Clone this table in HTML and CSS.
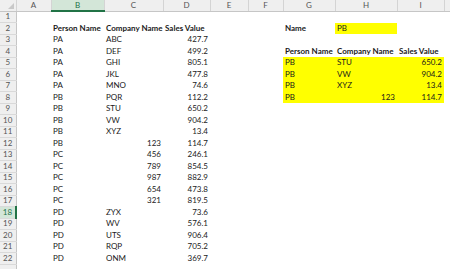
FILE: index.html
```html
<!DOCTYPE html>
<html>
<head>
<meta charset="utf-8">
<link rel="stylesheet" href="styles.css">
</head>
<body>
<table class="sheet">
<colgroup>
<col class="w-rh"><col class="w-a"><col class="w-b"><col class="w-c"><col class="w-d"><col class="w-e"><col class="w-f"><col class="w-g"><col class="w-h"><col class="w-i"><col class="w-j">
</colgroup>
<thead>
<tr class="hdr">
<th class="corner"><span class="tri"></span></th><th>A</th><th class="sel">B</th><th>C</th><th>D</th><th>E</th><th>F</th><th>G</th><th>H</th><th>I</th><th></th>
</tr>
</thead>
<tbody>
<tr><th>1</th><td></td><td></td><td></td><td></td><td></td><td></td><td></td><td></td><td></td><td></td></tr>
<tr><th>2</th><td></td><td class="b">Person Name</td><td class="b">Company Name</td><td class="b">Sales Value</td><td></td><td></td><td class="b">Name</td><td class="y">PB</td><td></td><td></td></tr>
<tr><th>3</th><td></td><td>PA</td><td>ABC</td><td class="n">427.7</td><td></td><td></td><td></td><td></td><td></td><td></td></tr>
<tr><th>4</th><td></td><td>PA</td><td>DEF</td><td class="n">499.2</td><td></td><td></td><td class="b">Person Name</td><td class="b">Company Name</td><td class="b">Sales Value</td><td></td></tr>
<tr><th>5</th><td></td><td>PA</td><td>GHI</td><td class="n">805.1</td><td></td><td></td><td class="y">PB</td><td class="y">STU</td><td class="y n">650.2</td><td></td></tr>
<tr><th>6</th><td></td><td>PA</td><td>JKL</td><td class="n">477.8</td><td></td><td></td><td class="y">PB</td><td class="y">VW</td><td class="y n">904.2</td><td></td></tr>
<tr><th>7</th><td></td><td>PA</td><td>MNO</td><td class="n">74.6</td><td></td><td></td><td class="y">PB</td><td class="y">XYZ</td><td class="y n">13.4</td><td></td></tr>
<tr><th>8</th><td></td><td>PB</td><td>PQR</td><td class="n">112.2</td><td></td><td></td><td class="y">PB</td><td class="y n">123</td><td class="y n">114.7</td><td></td></tr>
<tr><th>9</th><td></td><td>PB</td><td>STU</td><td class="n">650.2</td><td></td><td></td><td></td><td></td><td></td><td></td></tr>
<tr><th>10</th><td></td><td>PB</td><td>VW</td><td class="n">904.2</td><td></td><td></td><td></td><td></td><td></td><td></td></tr>
<tr><th>11</th><td></td><td>PB</td><td>XYZ</td><td class="n">13.4</td><td></td><td></td><td></td><td></td><td></td><td></td></tr>
<tr><th>12</th><td></td><td>PB</td><td class="n">123</td><td class="n">114.7</td><td></td><td></td><td></td><td></td><td></td><td></td></tr>
<tr><th>13</th><td></td><td>PC</td><td class="n">456</td><td class="n">246.1</td><td></td><td></td><td></td><td></td><td></td><td></td></tr>
<tr><th>14</th><td></td><td>PC</td><td class="n">789</td><td class="n">854.5</td><td></td><td></td><td></td><td></td><td></td><td></td></tr>
<tr><th>15</th><td></td><td>PC</td><td class="n">987</td><td class="n">882.9</td><td></td><td></td><td></td><td></td><td></td><td></td></tr>
<tr><th>16</th><td></td><td>PC</td><td class="n">654</td><td class="n">473.8</td><td></td><td></td><td></td><td></td><td></td><td></td></tr>
<tr><th>17</th><td></td><td>PC</td><td class="n">321</td><td class="n">819.5</td><td></td><td></td><td></td><td></td><td></td><td></td></tr>
<tr><th class="rsel">18</th><td></td><td>PD</td><td>ZYX</td><td class="n">73.6</td><td></td><td></td><td></td><td></td><td></td><td></td></tr>
<tr><th>19</th><td></td><td>PD</td><td>WV</td><td class="n">576.1</td><td></td><td></td><td></td><td></td><td></td><td></td></tr>
<tr><th>20</th><td></td><td>PD</td><td>UTS</td><td class="n">906.4</td><td></td><td></td><td></td><td></td><td></td><td></td></tr>
<tr><th>21</th><td></td><td>PD</td><td>RQP</td><td class="n">705.2</td><td></td><td></td><td></td><td></td><td></td><td></td></tr>
<tr><th>22</th><td></td><td>PD</td><td>ONM</td><td class="n">369.7</td><td></td><td></td><td></td><td></td><td></td><td></td></tr>
<tr class="last"><th></th><td></td><td></td><td></td><td></td><td></td><td></td><td></td><td></td><td></td><td></td></tr>
</tbody>
</table>
</body>
</html>
```
FILE: styles.css
```css
html, body {
  margin: 0;
  padding: 0;
  background: #fff;
  overflow: hidden;
}
.sheet {
  border-collapse: collapse;
  table-layout: fixed;
  width: 490px;
  font-family: Lato, "Liberation Sans", sans-serif;
  font-size: 8px;
  color: #1a1a1a;
}
.w-rh { width: 16px; }
.w-a { width: 35px; }
.w-b { width: 53px; }
.w-c { width: 59px; }
.w-d { width: 47px; }
.w-e { width: 38px; }
.w-f { width: 35px; }
.w-g { width: 52px; }
.w-h { width: 62px; }
.w-i { width: 47px; }
.w-j { width: 46px; }
.sheet tbody tr {
  height: 11.5px;
}
.sheet td, .sheet th {
  padding: 0 2px;
  white-space: nowrap;
  overflow: hidden;
  line-height: 9px;
  height: 11.5px;
  box-sizing: border-box;
}
.sheet td {
  text-align: left;
}
.hdr th {
  height: 11px;
  background: #efefef;
  color: #555;
  font-weight: normal;
  text-align: center;
  border-right: 1px solid #d4d4d4;
  border-bottom: 1px solid #c6c6c6;
}
.hdr th.sel {
  background: #d3e6d8;
  color: #217346;
  border-bottom: 2px solid #217346;
}
.hdr th.corner {
  position: relative;
}
.tri {
  position: absolute;
  right: 2px;
  bottom: 2px;
  width: 0;
  height: 0;
  border-left: 6px solid transparent;
  border-bottom: 6px solid #c8c8c8;
}
tbody th {
  background: #efefef;
  color: #555;
  font-weight: normal;
  text-align: center;
  border-right: 1px solid #c6c6c6;
  border-bottom: 1px solid #d9d9d9;
  padding: 0;
}
tbody th.rsel {
  background: #d3e6d8;
  color: #217346;
  border-right: 2px solid #217346;
}
.b { font-weight: bold; }
.n { text-align: right !important; }
.y { background: #ffff00; }
```
